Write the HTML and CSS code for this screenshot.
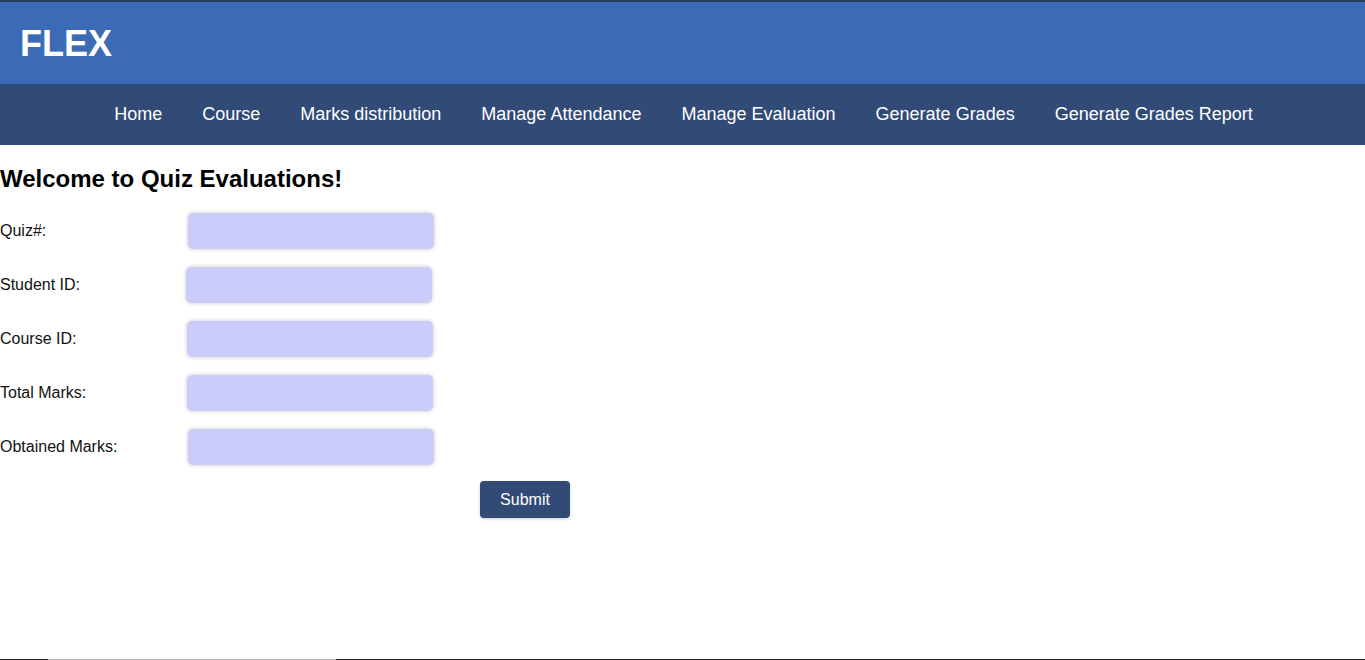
FILE: index.html
```html
<!DOCTYPE html>
<html lang="en">
<head>
<meta charset="utf-8">
<title>FLEX - Quiz Evaluations</title>
<link rel="stylesheet" href="styles.css">
</head>
<body>
<div class="page">
  <header class="topbar">
    <h1 class="logo">FLEX</h1>
  </header>
  <nav class="nav">
    <a href="#">Home</a>
    <a href="#">Course</a>
    <a href="#">Marks distribution</a>
    <a href="#">Manage Attendance</a>
    <a href="#">Manage Evaluation</a>
    <a href="#">Generate Grades</a>
    <a href="#">Generate Grades Report</a>
  </nav>
  <main class="content">
    <h2 class="title">Welcome to Quiz Evaluations!</h2>
    <form class="form">
      <div class="row"><label class="label">Quiz#:</label><input class="field f0" type="text"></div>
      <div class="row"><label class="label">Student ID:</label><input class="field f1" type="text"></div>
      <div class="row"><label class="label">Course ID:</label><input class="field f2" type="text"></div>
      <div class="row"><label class="label">Total Marks:</label><input class="field f3" type="text"></div>
      <div class="row"><label class="label">Obtained Marks:</label><input class="field f0" type="text"></div>
      <div class="actions"><button class="submit" type="button">Submit</button></div>
    </form>
  </main>
  <div class="edge"></div>
</div>
</body>
</html>
```
FILE: styles.css
```css
* { box-sizing: border-box; }
html, body { margin: 0; padding: 0; }
body {
  font-family: "Liberation Sans", Arial, sans-serif;
  background: #ffffff;
  color: #000;
}
.page {
  min-height: 660px;
  height: 660px;
  display: flex;
  flex-direction: column;
}
.topbar {
  background: #3b6bb4;
  border-top: 2px solid #2b3d5c;
  height: 84px;
  display: flex;
  align-items: center;
  padding-left: 20px;
}
.logo {
  margin: 0;
  color: #fff;
  font-size: 36px;
  font-weight: bold;
  line-height: 1;
  padding-top: 2px;
}
.nav {
  background: #314a76;
  height: 61px;
  display: flex;
  justify-content: center;
  align-items: center;
  padding-left: 2px;
}
.nav a {
  color: #fff;
  text-decoration: none;
  font-size: 18px;
  padding: 0 20px;
  line-height: 1;
  padding-bottom: 2px;
}
.content {
  flex: 1;
}
.title {
  margin: 20px 0 0;
  font-size: 24px;
  font-weight: bold;
  line-height: 28px;
}
.form {
  margin-top: 20px;
  display: flex;
  flex-direction: column;
  gap: 18px;
}
.row {
  display: flex;
  align-items: center;
  height: 36px;
}
.label {
  width: 188px;
  font-size: 16px;
  color: #111;
}
.field {
  width: 246px;
  height: 36px;
  border: none;
  border-radius: 5px;
  background: #ccccfb;
  box-shadow: 0 0 4px rgba(0,0,0,0.22);
  outline: none;
}
.f1 { margin-left: -2px; }
.f2 { margin-left: -1px; }
.f3 { margin-left: -1px; }
.actions {
  display: flex;
  padding-left: 480px;
  margin-top: -2px;
}
.submit {
  width: 90px;
  height: 37px;
  border: none;
  border-radius: 4px;
  background: #314a76;
  color: #fff;
  font-family: "Liberation Sans", Arial, sans-serif;
  font-size: 16px;
  box-shadow: 0 1px 3px rgba(0,0,0,0.2);
}
.edge {
  height: 1px;
  background: linear-gradient(to right, #222 0, #222 48px, #b8b8b8 48px, #b8b8b8 336px, #222 336px, #222 100%);
}
```
